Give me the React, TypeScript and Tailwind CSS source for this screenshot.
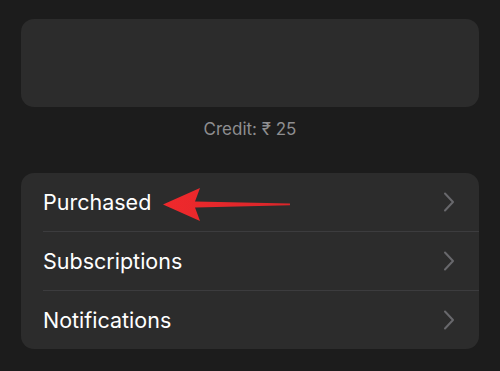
import { Fragment } from 'react'

const ROWS = ['Purchased', 'Subscriptions', 'Notifications']

function Chevron() {
  return (
    <svg width="12" height="20" viewBox="0 0 12 20" fill="none" className="shrink-0">
      <polyline points="2,1.5 10,10 2,18.5" stroke="#68686c" strokeWidth="2" strokeLinecap="round" strokeLinejoin="round" />
    </svg>
  )
}

function Arrow() {
  return (
    <svg width="130" height="36" viewBox="0 0 130 36" className="absolute left-[141px] top-[14px] pointer-events-none">
      <defs>
        <linearGradient id="tail" x1="0" x2="1" y1="0" y2="0">
          <stop offset="0" stopColor="#f0292c" />
          <stop offset="1" stopColor="#d9262a" />
        </linearGradient>
      </defs>
      <path d="M1 17.5 L38 1 L33 14.5 L128 16.5 L128 18.3 L33 20.5 L38 34 Z" fill="url(#tail)" />
    </svg>
  )
}

export default function App() {
  return (
    <div className="w-[500px] h-[371px] bg-[#1c1c1c] px-[21px] pt-[19px] font-['Inter',sans-serif]">
      {/* Top card */}
      <div className="h-[88px] rounded-[13px] bg-[#2c2c2c]" />

      <p className="mt-[12px] text-center text-[17px] text-[#8e8e90] leading-5">Credit: ₹ 25</p>

      {/* Menu list */}
      <div className="mt-[34px] rounded-[13px] bg-[#2c2c2c] relative">
        {ROWS.map((label, i) => (
          <Fragment key={label}>
            {i > 0 && <div className="ml-[22px] h-px bg-[#3c3c3e]" />}
            <div className="h-[58px] flex items-center justify-between pl-[22px] pr-[24px]">
              <span className="text-[21.5px] text-white">{label}</span>
              <Chevron />
            </div>
          </Fragment>
        ))}
        <Arrow />
      </div>
    </div>
  )
}
